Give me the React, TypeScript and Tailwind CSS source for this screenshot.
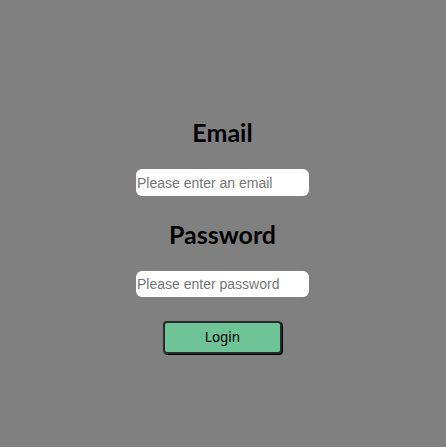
export default function App() {
  return (
    <div className="min-h-screen bg-[#808080] flex flex-col items-center pt-[116px] pr-px font-['Lato',sans-serif]">
      {/* Email */}
      <h2 className="text-[25px] leading-8 font-bold text-black">Email</h2>
      <input
        type="email"
        placeholder="Please enter an email"
        className="mt-[21px] w-[173px] h-[27px] rounded-md bg-white px-px text-sm font-['Liberation_Sans',Arial,sans-serif] text-black placeholder:text-[#757575] outline-none"
      />

      {/* Password */}
      <h2 className="mt-[22px] text-[25px] leading-8 font-bold text-black">Password</h2>
      <input
        type="password"
        placeholder="Please enter password"
        className="mt-[21px] w-[173px] h-[26px] rounded-md bg-white px-px text-sm font-['Liberation_Sans',Arial,sans-serif] text-black placeholder:text-[#757575] outline-none"
      />

      <button
        type="button"
        className="mt-[24px] w-[119px] h-[33px] rounded bg-[#6fc497] border-2 border-[#2a2a2a] shadow-[1px_1px_0_#000] text-[13.5px] text-black font-['Noto_Sans',sans-serif]"
      >
        Login
      </button>
    </div>
  );
}
